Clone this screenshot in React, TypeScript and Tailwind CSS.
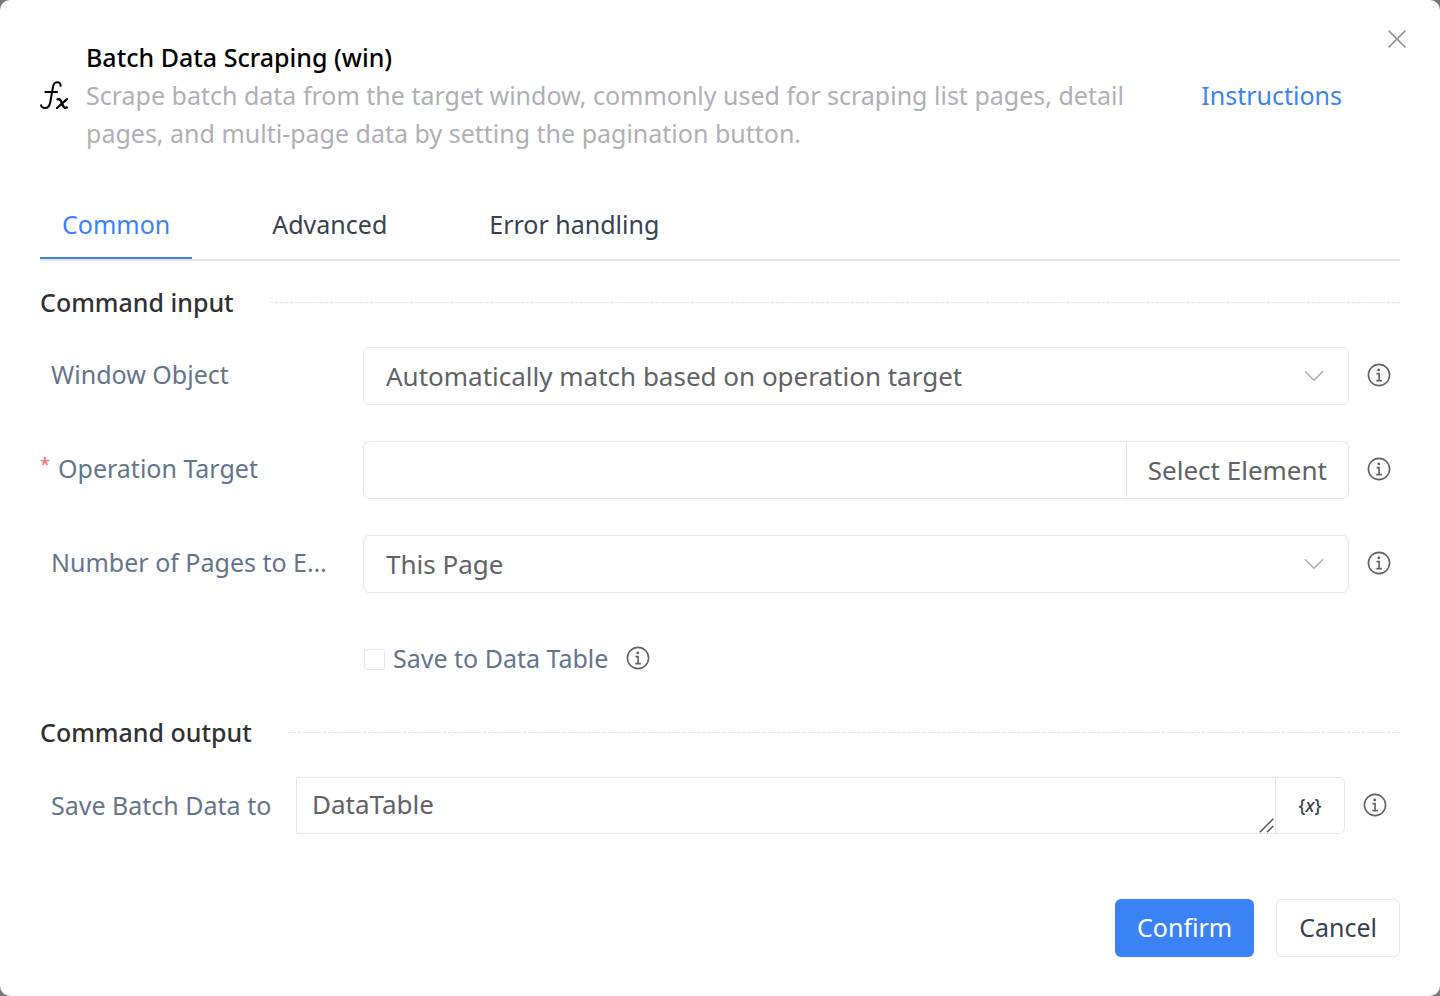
import { useState } from "react";
import type { ReactNode } from "react";

const tabs = ["Common", "Advanced", "Error handling"];

function FxIcon() {
  return (
    <svg viewBox="0 0 28 28" className="h-7 w-7 shrink-0 text-black" fill="none" stroke="currentColor" strokeLinecap="round" strokeLinejoin="round" aria-hidden="true">
      <path d="M20.6 4.8C20.8 2.4 18.9 1 16.9 1.2C14.4 1.4 13.5 3.2 13 6L10.2 21.5C9.5 25.2 7.8 27 5.1 27C2.5 27 1 25.6 1.2 24.2" strokeWidth="2" />
      <path d="M5.4 11H17" strokeWidth="2" />
      <path d="M17.6 18.4C19.4 17.8 20 18.2 20.7 19.6L23.2 25C23.9 26.6 25 27.2 26.8 26.4" strokeWidth="2.3" />
      <path d="M27 18.2L17 27" strokeWidth="2.3" />
    </svg>
  );
}

function InfoButton({ label }: { label: string }) {
  return (
    <button type="button" aria-label={label} className="mb-0.5 ml-[18px] h-6 w-6 shrink-0 text-[#606266]">
      <svg viewBox="0 0 24 24" className="h-6 w-6" fill="none" stroke="currentColor" strokeWidth="1.6" aria-hidden="true">
        <circle cx="12" cy="12" r="10.6" />
        <circle cx="11.8" cy="6.9" r="1.4" fill="currentColor" stroke="none" />
        <path d="M9.5 10.6H12.1V17.4M9.3 17.6H14.9" />
      </svg>
    </button>
  );
}

function SectionTitle({ children }: { children: ReactNode }) {
  return (
    <div className="flex h-10 items-center gap-9">
      <h2 className="leading-10 font-medium text-[#303133]">{children}</h2>
      <div className="flex-1 border-t border-dashed border-[#dcdfe6]" />
    </div>
  );
}

function SelectField({ id, value }: { id: string; value: string }) {
  return (
    <div className="relative min-w-0 flex-1">
      <select id={id} className="block h-[58px] w-full appearance-none rounded-md border border-[#e4e6ea] bg-white px-[22px] text-[26px] text-[#606266]">
        <option>{value}</option>
      </select>
      <svg viewBox="0 0 20 12" className="pointer-events-none absolute top-[23px] right-[25px] h-3 w-5 text-[#a8abb2]" fill="none" stroke="currentColor" strokeWidth="1.5" aria-hidden="true">
        <path d="M1 1.2L10 10.2L19 1.2" />
      </svg>
    </div>
  );
}

export default function App() {
  const [active, setActive] = useState("Common");
  const [checked, setChecked] = useState(false);

  return (
    <div className="min-h-screen bg-[#777777] font-['Noto_Sans',sans-serif] text-[25px]">
      <main role="dialog" aria-labelledby="dialog-title" className="flex min-h-screen flex-col rounded-[10px] bg-white px-10 pt-[38px] pb-[39px]">
        <header className="relative flex items-center">
          <FxIcon />
          <div className="ml-[18px] min-w-0 flex-1">
            <h1 id="dialog-title" className="leading-[38px] font-medium text-black">Batch Data Scraping (win)</h1>
            <p className="leading-[38px] text-[#b0afb6]">
              Scrape batch data from the target window, commonly used for scraping list pages, detail pages, and multi-page data by setting the pagination button.
            </p>
          </div>
          <a href="#instructions" className="mr-[58px] ml-12 leading-[38px] text-[#3b82f6]">Instructions</a>
          <button type="button" aria-label="Close" className="absolute -top-2 -right-1.5 h-[18px] w-[18px] text-[#909399]">
            <svg viewBox="0 0 18 18" className="h-[18px] w-[18px]" fill="none" stroke="currentColor" strokeWidth="1.5" aria-hidden="true">
              <path d="M0.6 0.6L17.4 17.4M17.4 0.6L0.6 17.4" />
            </svg>
          </button>
        </header>

        <nav role="tablist" className="mt-10 flex gap-[58px] border-b-2 border-[#e4e7ed]">
          {tabs.map((tab) => (
            <button
              key={tab}
              type="button"
              role="tab"
              aria-selected={active === tab}
              onClick={() => setActive(tab)}
              className={
                active === tab
                  ? "h-[67px] border-b-2 border-[#3b82f6] px-[22px] text-[#3b82f6]"
                  : "h-[67px] border-b-2 border-transparent px-[22px] text-[#374151]"
              }
            >
              {tab}
            </button>
          ))}
        </nav>

        <section className="mt-[21px]">
          <SectionTitle>Command input</SectionTitle>
          <div className="mt-[25px] flex flex-col gap-9">
            <div className="flex items-center pr-[9px]">
              <label htmlFor="window-object" className="w-[323px] shrink-0 pb-0.5 pl-[11px] text-[#64748b]">Window Object</label>
              <SelectField id="window-object" value="Automatically match based on operation target" />
              <InfoButton label="About window object" />
            </div>
            <div className="flex items-center pr-[9px]">
              <label htmlFor="operation-target" className="flex w-[323px] shrink-0 pb-0.5 text-[#64748b]">
                <span className="w-[18px] text-lg font-medium text-[#f56c6c]">*</span>Operation Target
              </label>
              <div className="flex h-[58px] min-w-0 flex-1 rounded-md border border-[#e4e6ea]">
                <input id="operation-target" type="text" className="min-w-0 flex-1 rounded-l-md px-[22px] text-[26px] text-[#606266]" />
                <button type="button" className="shrink-0 border-l border-[#e4e6ea] px-[21px] text-[26px] text-[#606266]">Select Element</button>
              </div>
              <InfoButton label="About operation target" />
            </div>
            <div className="flex items-center pr-[9px]">
              <label htmlFor="page-count" className="w-[323px] shrink-0 pb-0.5 pl-[11px] whitespace-nowrap text-[#64748b]">Number of Pages to E…</label>
              <SelectField id="page-count" value="This Page" />
              <InfoButton label="About number of pages" />
            </div>
            <div className="flex h-[60px] items-center pl-[324px]">
              <input
                id="save-table"
                type="checkbox"
                checked={checked}
                onChange={(e) => setChecked(e.target.checked)}
                className="h-[21px] w-[21px] appearance-none rounded-[3px] border border-[#e4e6ea] bg-white checked:bg-[#3b82f6]"
              />
              <label htmlFor="save-table" className="ml-2 text-[#64748b]">Save to Data Table</label>
              <InfoButton label="About saving to a data table" />
            </div>
          </div>
        </section>

        <section className="mt-[23px]">
          <SectionTitle>Command output</SectionTitle>
          <div className="mt-[25px] flex items-center pr-[13px]">
            <label htmlFor="save-batch" className="w-64 shrink-0 pl-[11px] whitespace-nowrap text-[#64748b]">Save Batch Data to</label>
            <div className="flex h-[57px] min-w-0 flex-1 rounded-r-md border border-[#e4e6ea]">
              <div className="relative min-w-0 flex-1">
                <textarea id="save-batch" defaultValue="DataTable" rows={1} className="block h-full w-full resize-none overflow-hidden px-[15px] py-2 text-[26px] leading-9 text-[#606266]" />
                <svg viewBox="0 0 15 15" className="pointer-events-none absolute right-px bottom-0 h-[15px] w-[15px] text-[#505050]" fill="none" stroke="currentColor" strokeWidth="1.5" aria-hidden="true">
                  <path d="M0.8 14.2L14.2 0.8M8 14.2L14.2 8" />
                </svg>
              </div>
              <button type="button" aria-label="Insert variable" className="w-[69px] border-l border-[#e4e6ea] pb-0.5 text-lg font-medium text-[#374151]">
                {"{"}<i>x</i>{"}"}
              </button>
            </div>
            <InfoButton label="About saving batch data" />
          </div>
        </section>

        <footer className="mt-[65px] flex justify-end gap-[22px]">
          <button type="button" className="h-[58px] rounded-md bg-[#3b82f6] px-[22px] text-white">Confirm</button>
          <button type="button" className="h-[58px] rounded-md border border-[#e4e6ea] bg-white px-[22px] text-[#374151]">Cancel</button>
        </footer>
      </main>
    </div>
  );
}
